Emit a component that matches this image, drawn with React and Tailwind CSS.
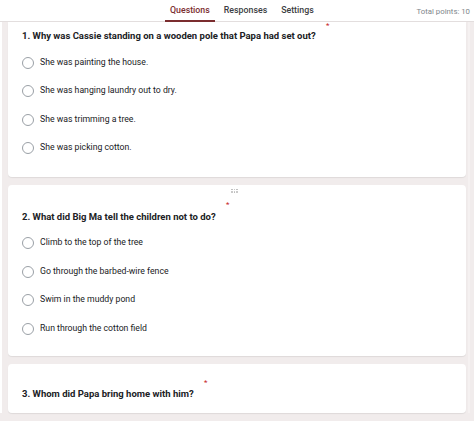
const questions = [
  {
    id: 1,
    title: "1. Why was Cassie standing on a wooden pole that Papa had set out?",
    star: "left-[318px] top-[0px]",
    options: [
      "She was painting the house.",
      "She was hanging laundry out to dry.",
      "She was trimming a tree.",
      "She was picking cotton.",
    ],
  },
  {
    id: 2,
    title: "2. What did Big Ma tell the children not to do?",
    star: "left-[218px] top-[16px]",
    handle: true,
    options: [
      "Climb to the top of the tree",
      "Go through the barbed-wire fence",
      "Swim in the muddy pond",
      "Run through the cotton field",
    ],
  },
  {
    id: 3,
    title: "3. Whom did Papa bring home with him?",
    star: "left-[196px] top-[15px]",
    handle: false,
    options: [],
  },
];

export default function App() {
  return (
    <div
      className="w-[474px] h-[421px] overflow-hidden bg-[#f1ecec] text-[#202124]"
      style={{ fontFamily: "Roboto, 'Liberation Sans', sans-serif" }}
    >
      <header className="h-[22px] bg-white border-b border-[#e3dede] flex relative">
        <nav className="flex h-full ml-[165px] text-[8.8px] font-medium">
          <div className="relative flex items-center pt-[1px] px-[5px] text-[#7b2d2f]">
            Questions
            <span className="absolute left-0 right-0 bottom-[-1px] h-[2px] bg-[#7b2d2f]" />
          </div>
          <div className="flex items-center pt-[1px] ml-[9px] text-[#3c4043]">Responses</div>
          <div className="flex items-center pt-[1px] ml-[14px] text-[#3c4043]">Settings</div>
        </nav>
        <div className="absolute right-[4px] top-[6px] text-[7.8px] text-[#80868b]">Total points: 10</div>
      </header>

      <div className="flex">
        <div className="w-[2px] bg-white" />
        <main className="flex flex-col gap-[8px] pl-[6px] w-[464px]">
          {questions.map((q) => (
            <QuestionCard key={q.id} q={q} />
          ))}
        </main>
        <div className="w-[2px] ml-[2px] bg-[#f5f1f1]" />
      </div>
    </div>
  );
}

function QuestionCard({ q }) {
  let pad = "rounded-[4px] pt-[26px] pb-[21px]";
  if (q.id === 1) pad = "rounded-b-[4px] pt-[8px] pb-[22px]";
  if (q.id === 3) pad = "rounded-[4px] pt-[24px] pb-[13px]";

  return (
    <section className={`relative bg-white shadow-[0_1px_1px_rgba(0,0,0,0.08)] ${pad}`}>
      {q.handle && (
        <div className="absolute left-[223px] top-[4px] grid grid-cols-3 gap-[1px]">
          {Array.from({ length: 6 }).map((_, i) => (
            <span key={i} className="w-[1.5px] h-[1.5px] bg-[#b8b8b8] rounded-full" />
          ))}
        </div>
      )}
      <span className={`absolute ${q.star} text-[8px] text-[#c5221f] leading-none`}>*</span>
      <h2 className="pl-[14px] text-[9.5px] font-bold leading-[12px]">{q.title}</h2>
      {q.options.length > 0 && (
        <ul className="mt-[14px] pl-[14px] flex flex-col gap-[15.5px]">
          {q.options.map((o) => (
            <li key={o} className="flex items-center gap-[6px] h-[13px]">
              <span className="w-[12px] h-[12px] rounded-full border border-[#9aa0a6]" />
              <span className="text-[8.7px] text-[#202124]">{o}</span>
            </li>
          ))}
        </ul>
      )}
    </section>
  );
}
